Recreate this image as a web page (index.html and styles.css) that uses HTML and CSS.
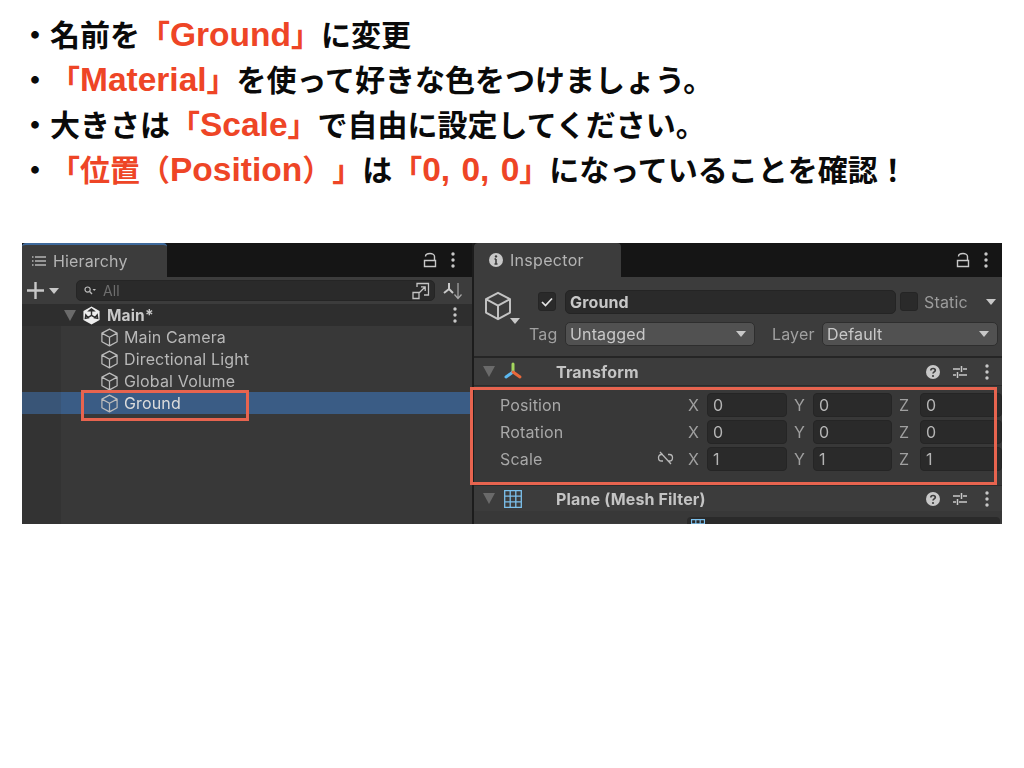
FILE: index.html
```html
<!DOCTYPE html>
<html lang="ja">
<head>
    <meta charset="utf-8">
    <title>Ground</title>
    <link rel="stylesheet" href="styles.css">
</head>
<body>
    <svg class="defs" width="0" height="0">
        <symbol id="cube" viewBox="0 0 20 20">
            <path d="M10 1.2 18 5.400V14.400L10 18.800 2 14.400V5.400ZM2 5.400 10 9.800 18 5.400M10 9.800V18.800" fill="none" stroke="currentColor" stroke-width="1.300" stroke-linejoin="round"/>
        </symbol>
        <symbol id="lock" viewBox="0 0 14 16">
            <path d="M2.500 4.500C2.500 .5 11.500 .5 11.500 4.500V8.500M1.500 8.500H12.500V14.500H1.500Z" fill="none" stroke="currentColor" stroke-width="1.400"/>
        </symbol>
        <symbol id="kebab" viewBox="0 0 4 16">
            <circle cx="2" cy="2" r="1.700" fill="currentColor"/>
            <circle cx="2" cy="8" r="1.700" fill="currentColor"/>
            <circle cx="2" cy="14" r="1.700" fill="currentColor"/>
        </symbol>
        <symbol id="sliders" viewBox="0 0 14 14">
            <path d="M0 4H7M10 4H14M0 10H3M6 10H14M8.500 1V7M4.500 7V13" fill="none" stroke="currentColor" stroke-width="1.500"/>
        </symbol>
        <symbol id="help" viewBox="0 0 14 14">
            <circle cx="7" cy="7" r="7" fill="currentColor"/>
            <path d="M4.800 5.400C4.800 2.800 9.300 2.900 9.300 5.300 9.300 6.900 7 6.900 7 8.600" fill="none" stroke="#3c3c3c" stroke-width="1.700"/>
            <circle cx="7" cy="11" r="1.100" fill="#3c3c3c"/>
        </symbol>
    </svg>

    <ul class="notes">
        <li>・名前を<em>「<span class="latin">Ground</span>」</em>に変更</li>
        <li>・<em>「<span class="latin">Material</span>」</em>を使って好きな色をつけましょう。</li>
        <li>・大きさは<em>「<span class="latin">Scale</span>」</em>で自由に設定してください。</li>
        <li>・<em>「位置（<span class="latin">Position</span>）」</em>は<em>「<span class="latin zeros">0, 0, 0</span>」</em>になっていることを確認！</li>
    </ul>

    <div class="editor">
        <section class="hierarchy">
            <div class="tabbar">
                <div class="tab tab-blue">
                    <svg class="tab-icon" width="14" height="12" viewBox="0 0 14 12"><path d="M3 2H14M3 6H14M3 10H14M0 2H1.500M0 6H1.500M0 10H1.500" stroke="currentColor" stroke-width="1.300"/></svg>
                    Hierarchy
                </div>
                <div class="tab-tools">
                    <svg class="ic-lock"><use href="#lock"/></svg>
                    <svg class="ic-kebab"><use href="#kebab"/></svg>
                </div>
            </div>
            <div class="toolbar">
                <svg class="plus" width="17" height="17" viewBox="0 0 17 17"><path d="M8.500 0V17M0 8.500H17" stroke="#c8c8c8" stroke-width="2.400"/></svg>
                <span class="caret caret-plus"></span>
                <div class="search">
                    <svg class="search-icon" width="12" height="10" viewBox="0 0 12 10"><circle cx="3.600" cy="3.600" r="2.600" fill="none" stroke="#bbb" stroke-width="1.200"/><path d="M5.600 5.600 8 8" stroke="#bbb" stroke-width="1.400"/><path d="M8.500 3H12L10.200 5Z" fill="#bbb"/></svg>
                    <span class="search-text">All</span>
                    <svg class="search-btn" width="18" height="18" viewBox="0 0 18 18"><path d="M5 5V1.500H16.500V13H12M1 10.500H7V16.500H1ZM7.500 10.500 13 5M9 4.800H13.200V9" fill="none" stroke="#c4c4c4" stroke-width="1.300"/></svg>
                </div>
                <svg class="sort" width="20" height="18" viewBox="0 0 20 18"><path d="M6 1V7M6 7 1 11M6 7 10 11" fill="none" stroke="#c8c8c8" stroke-width="2"/><path d="M15 1V16M11.500 12.500 15 16.500 18.500 12.500" fill="none" stroke="#a8a8a8" stroke-width="1.200"/></svg>
            </div>
            <div class="scene-row">
                <span class="tri tri-scene"></span>
                <svg class="unity" width="19" height="19" viewBox="0 0 20 20"><path d="M10 .5 18.500 5.300V14.800L10 19.500 1.500 14.800V5.300Z" fill="#eee"/><path d="M10 5.500V9.800M10 9.800 6 12.200M10 9.800 14 12.200M10 3 7.500 5 12.500 5ZM3.500 13 4 9.500 6.500 12.500ZM16.500 13 16 9.500 13.500 12.500Z" fill="none" stroke="#2e2e2e" stroke-width="1.500"/></svg>
                <b>Main*</b>
                <svg class="ic-kebab scene-kebab"><use href="#kebab"/></svg>
            </div>
            <div class="tree">
                <div class="tree-row"><svg class="ic-cube"><use href="#cube"/></svg>Main Camera</div>
                <div class="tree-row"><svg class="ic-cube"><use href="#cube"/></svg>Directional Light</div>
                <div class="tree-row"><svg class="ic-cube"><use href="#cube"/></svg>Global Volume</div>
                <div class="tree-row selected"><svg class="ic-cube"><use href="#cube"/></svg>Ground</div>
            </div>
        </section>

        <section class="inspector">
            <div class="tabbar">
                <div class="tab tab-insp">
                    <svg class="tab-icon" width="14" height="14" viewBox="0 0 14 14"><circle cx="7" cy="7" r="7" fill="#c8c8c8"/><path d="M7 6V11M5.500 11H8.500M5.500 6H7" stroke="#3c3c3c" stroke-width="1.600"/><circle cx="7" cy="3.400" r="1.200" fill="#3c3c3c"/></svg>
                    Inspector
                </div>
                <div class="tab-tools tools-insp">
                    <svg class="ic-lock"><use href="#lock"/></svg>
                    <svg class="ic-kebab"><use href="#kebab"/></svg>
                </div>
            </div>

            <div class="object">
                <div class="object-icon">
                    <svg class="ic-cube-big"><use href="#cube"/></svg>
                    <span class="caret caret-obj"></span>
                </div>
                <div class="object-rows">
                    <div class="object-row name-row">
                        <span class="check on">
                            <svg width="12" height="10" viewBox="0 0 12 10"><path d="M1 5 4.500 8.500 11 1.500" fill="none" stroke="#e4e4e4" stroke-width="1.700"/></svg>
                        </span>
                        <span class="name-field">Ground</span>
                        <span class="check"></span>
                        <span class="static-label">Static</span>
                        <span class="caret"></span>
                    </div>
                    <div class="object-row">
                        <span class="tag-label">Tag</span>
                        <span class="dropdown dd-tag">Untagged<span class="caret"></span></span>
                        <span class="layer-label">Layer</span>
                        <span class="dropdown dd-layer">Default<span class="caret"></span></span>
                    </div>
                </div>
            </div>

            <div class="comp-head">
                <span class="tri"></span>
                <svg class="comp-icon" width="20" height="20" viewBox="0 0 20 20"><path d="M10 2V10" stroke="#a4d65e" stroke-width="3" stroke-linecap="round"/><path d="M10 10 3 15" stroke="#5bb8f0" stroke-width="3" stroke-linecap="round"/><path d="M10 10 17 15" stroke="#e8683a" stroke-width="3" stroke-linecap="round"/></svg>
                <b>Transform</b>
                <svg class="ic-help"><use href="#help"/></svg>
                <svg class="ic-sliders"><use href="#sliders"/></svg>
                <svg class="ic-kebab"><use href="#kebab"/></svg>
            </div>

            <div class="transform">
                <div class="t-row">
                    <span class="t-label">Position</span>
                    <span class="axis">X</span><span class="num">0</span>
                    <span class="axis">Y</span><span class="num">0</span>
                    <span class="axis">Z</span><span class="num">0</span>
                </div>
                <div class="t-row">
                    <span class="t-label">Rotation</span>
                    <span class="axis">X</span><span class="num">0</span>
                    <span class="axis">Y</span><span class="num">0</span>
                    <span class="axis">Z</span><span class="num">0</span>
                </div>
                <div class="t-row">
                    <span class="t-label">Scale
                        <svg class="unlink" width="17" height="14" viewBox="0 0 17 14"><path d="M6 3.500H4.500C.5 3.500.5 10 4.500 10H6M11 3.500H12.500C16.500 3.500 16.500 10 12.500 10H11M3 1 14 13" fill="none" stroke="#b8b8b8" stroke-width="1.300"/></svg>
                    </span>
                    <span class="axis">X</span><span class="num">1</span>
                    <span class="axis">Y</span><span class="num">1</span>
                    <span class="axis">Z</span><span class="num">1</span>
                </div>
            </div>

            <div class="comp-head comp-plane">
                <span class="tri"></span>
                <svg class="comp-icon" width="18" height="18" viewBox="0 0 18 18"><path d="M.7.7H17.300V17.300H.7ZM6.200.7V17.300M11.800.7V17.300M.7 6.200H17.300M.7 11.800H17.300" fill="none" stroke="#7cc0ec" stroke-width="1.300"/></svg>
                <b>Plane (Mesh Filter)</b>
                <svg class="ic-help"><use href="#help"/></svg>
                <svg class="ic-sliders"><use href="#sliders"/></svg>
                <svg class="ic-kebab"><use href="#kebab"/></svg>
            </div>
            <div class="mesh-row">
                <div class="mesh-field">
                    <svg width="14" height="14" viewBox="0 0 18 18"><path d="M.7.7H17.300V17.300H.7ZM6.200.7V17.300M11.800.7V17.300M.7 6.200H17.300M.7 11.800H17.300" fill="none" stroke="#7cc0ec" stroke-width="1.500"/></svg>
                </div>
            </div>
        </section>

        <div class="mark mark-ground"></div>
        <div class="mark mark-transform"></div>
    </div>
</body>
</html>
```

FILE: styles.css
```css
* {
    box-sizing: border-box;
}
body {
    margin: 0;
    background: white;
    font-family: "Liberation Sans", "Noto Sans CJK JP", sans-serif;
}
.defs {
    position: absolute;
}

/* 上の説明文 */
.notes {
    list-style: none;
    margin: 0;
    padding: 13px 0 0 20px;
    height: 243px;
    font-size: 30px;
    font-weight: bold;
    line-height: 45px;
    color: #0a0a0a;
    white-space: nowrap;
    text-spacing-trim: space-all;
}
.notes em {
    font-style: normal;
    color: #ee4526;
}
.latin {
    font-size: 33.5px;
    line-height: 30px;
}
.zeros {
    word-spacing: 2px;
}

/* Unityのスクリーンショット部分 */
.editor {
    position: relative;
    display: flex;
    width: 980px;
    height: 281px;
    margin-left: 22px;
    overflow: hidden;
    background: #1c1c1c;
    font-family: Inter, "Liberation Sans", sans-serif;
    font-size: 16px;
    letter-spacing: 0.15px;
    color: #c2c2c2;
    filter: blur(0.35px);
}
.hierarchy {
    flex: none;
    width: 450px;
    margin-right: 2px;
    background: #383838;
}
.inspector {
    flex: 1;
    min-width: 0;
    background: #3c3c3c;
}
.tabbar {
    display: flex;
    justify-content: space-between;
    height: 34px;
    background: #151515;
}
.tab {
    display: flex;
    align-items: center;
    width: 145px;
    height: 34px;
    padding-left: 10px;
    background: #3c3c3c;
    border-radius: 4px 4px 0 0;
    color: #b4b4b4;
}
.tab-blue {
    border-top: 2px solid #3f6a9c;
}
.tab-insp {
    width: 147px;
    padding-left: 15px;
    letter-spacing: 0.3px;
}
.tab-icon {
    margin-right: 7px;
}
.tab-tools {
    display: flex;
    align-items: center;
    gap: 14px;
    padding-right: 17px;
}
.tools-insp {
    padding-right: 14px;
}
.ic-lock {
    width: 14px;
    height: 16px;
    color: #c8c8c8;
}
.ic-kebab {
    width: 4px;
    height: 16px;
    color: #c8c8c8;
}

.toolbar {
    display: flex;
    align-items: center;
    height: 27px;
    padding-left: 5px;
    background: #3c3c3c;
}
.plus {
    margin-right: 5px;
}
.caret {
    display: inline-block;
    width: 0;
    height: 0;
    border-left: 5px solid transparent;
    border-right: 5px solid transparent;
    border-top: 6px solid #c8c8c8;
}
.search {
    display: flex;
    align-items: center;
    width: 359px;
    height: 21px;
    margin-left: 17px;
    padding: 0 4px 0 7px;
    background: #2a2a2a;
    border: 1px solid #252525;
    border-radius: 5px;
}
.search-icon {
    margin-right: 7px;
}
.search-text {
    flex: 1;
    font-size: 14px;
    color: #6e6e6e;
}
.sort {
    margin-left: 8px;
}

.scene-row {
    display: flex;
    align-items: center;
    height: 22px;
    padding-left: 42px;
    background: #2e2e2e;
    color: #c8c8c8;
    font-size: 15.5px;
}
.tri {
    width: 0;
    height: 0;
    border-left: 6px solid transparent;
    border-right: 6px solid transparent;
    border-top: 11px solid #6a6a6a;
}
.unity {
    margin: 0 6px;
}
.scene-kebab {
    margin-left: auto;
    margin-right: 15px;
}

.tree {
    height: 198px;
    background: linear-gradient(90deg, #333333 39px, #383838 39px);
}
.tree-row {
    display: flex;
    align-items: center;
    gap: 5px;
    height: 22px;
    padding-left: 78px;
    color: #b8b8b8;
}
.selected {
    background: linear-gradient(90deg, #395577 39px, #3a5c85 39px);
    color: #dcdcdc;
}
.ic-cube {
    width: 19px;
    height: 19px;
    color: #bcbcbc;
}

.object {
    display: flex;
    height: 81px;
    border-bottom: 2px solid #252525;
}
.object-icon {
    flex: none;
    position: relative;
    width: 55px;
    padding: 14px 0 0 9px;
}
.ic-cube-big {
    width: 30px;
    height: 30px;
    color: #c4c4c4;
}
.caret-obj {
    position: absolute;
    left: 36px;
    top: 41px;
}
.object-rows {
    flex: 1;
    min-width: 0;
    padding-top: 12px;
}
.object-row {
    display: flex;
    align-items: center;
    height: 25px;
}
.name-row {
    margin-bottom: 7px;
    padding-left: 9px;
}
.check {
    display: flex;
    align-items: center;
    justify-content: center;
    flex: none;
    width: 18px;
    height: 19px;
    background: #2a2a2a;
    border: 1px solid #252525;
    border-radius: 3px;
}
.name-field {
    flex: none;
    width: 331px;
    height: 24px;
    margin: 0 4px 0 9px;
    padding-left: 4px;
    background: #2a2a2a;
    border: 1px solid #242424;
    border-radius: 5px;
    font-weight: bold;
    font-size: 16px;
    line-height: 22px;
    color: #c8c8c8;
}
.static-label {
    flex: none;
    width: 62px;
    margin-left: 6px;
    color: #9c9c9c;
}
.tag-label {
    flex: none;
    width: 36px;
    color: #a0a0a0;
}
.layer-label {
    flex: none;
    width: 43px;
    margin: 0 7px 0 17px;
    color: #a0a0a0;
}
.dropdown {
    display: flex;
    flex: none;
    align-items: center;
    justify-content: space-between;
    height: 24px;
    padding: 0 8px 0 4px;
    background: #515151;
    border: 1px solid #2e2e2e;
    border-radius: 5px;
    color: #c8c8c8;
}
.dd-tag {
    width: 190px;
}
.dd-layer {
    width: 176px;
}

.comp-head {
    display: flex;
    align-items: center;
    height: 27px;
    padding-left: 9px;
    background: #3c3c3c;
    font-size: 16px;
}
.comp-icon {
    width: 20px;
    margin-left: 8px;
}
.comp-head b {
    flex: 1;
    margin-left: 33px;
    color: #c4c4c4;
}
.ic-help {
    width: 14px;
    height: 14px;
    color: #c8c8c8;
}
.ic-sliders {
    width: 14px;
    height: 14px;
    margin: 0 18px 0 13px;
    color: #c8c8c8;
}
.comp-head .ic-kebab {
    margin-right: 13px;
}

.transform {
    height: 100px;
    padding-top: 6px;
    background: #383838;
    border-top: 1px solid #2c2c2c;
}
.t-row {
    display: grid;
    grid-template-columns: 187px 20px 80px 26px 79px 28px 82px;
    align-items: center;
    height: 25px;
    margin-bottom: 2px;
    padding-left: 26px;
}
.t-label {
    display: flex;
    justify-content: space-between;
    padding-right: 13px;
    font-size: 16px;
    color: #a8a8a8;
}
.axis {
    padding-left: 7px;
    color: #a0a0a0;
    font-size: 16px;
}
.axis:nth-child(2) {
    padding-left: 1px;
}
.num {
    height: 24px;
    padding-left: 5px;
    background: #2a2a2a;
    border: 1px solid #252525;
    border-radius: 4px;
    font-size: 16px;
    line-height: 22px;
    color: #b4b4b4;
}
.unlink {
    margin-top: 2px;
}

.comp-plane {
    height: 26px;
    border-top: 1px solid #2c2c2c;
}
.mesh-row {
    height: 12px;
    padding: 6px 2px 0 213px;
    background: #383838;
}
.mesh-field {
    height: 20px;
    padding-left: 4px;
    background: #2a2a2a;
    border-radius: 4px;
}

/* 赤い枠 */
.mark {
    position: absolute;
    border: 3px solid #e7644f;
}
.mark-ground {
    left: 59px;
    top: 147px;
    width: 168px;
    height: 31px;
}
.mark-transform {
    left: 448px;
    top: 144px;
    width: 527px;
    height: 98px;
}
```
